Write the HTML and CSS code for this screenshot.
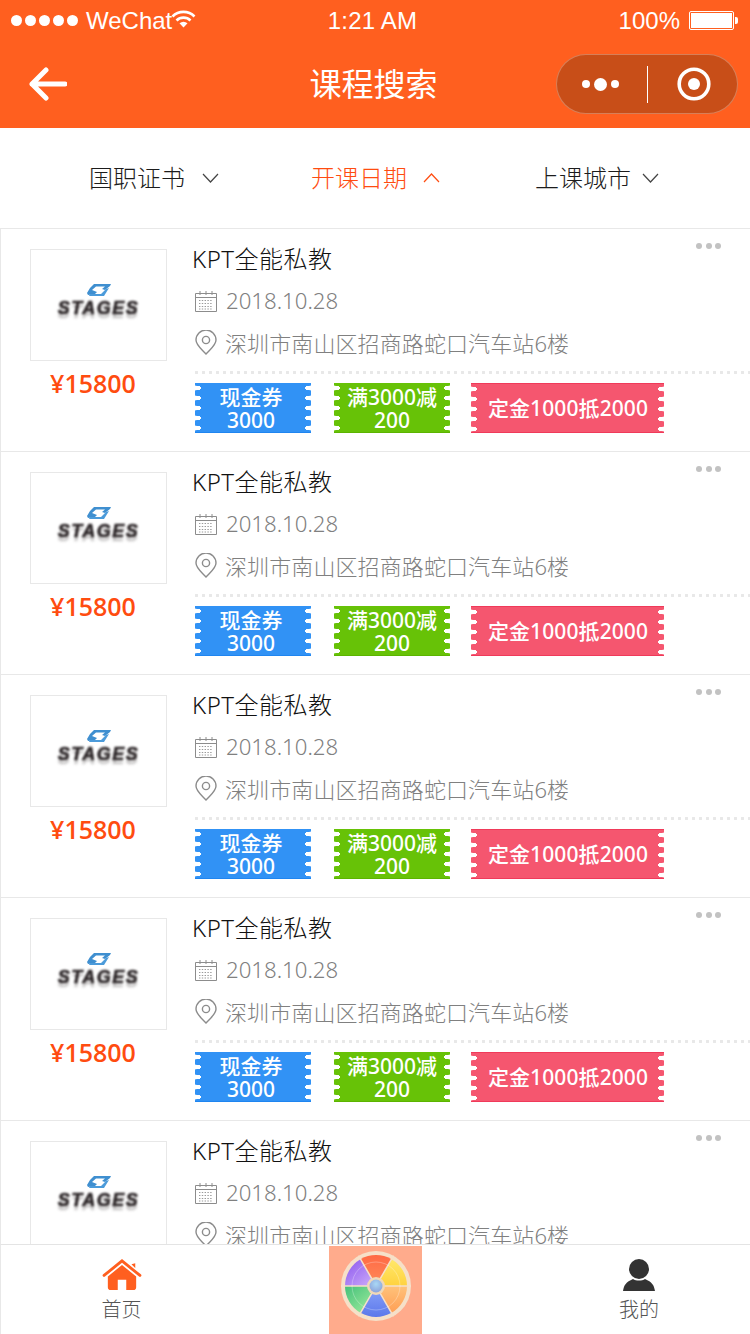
FILE: index.html
```html
<!DOCTYPE html>
<html lang="zh">
<head>
<meta charset="utf-8">
<title>课程搜索</title>
<link rel="stylesheet" href="styles.css">
</head>
<body>
<svg class="defs" width="0" height="0" aria-hidden="true">
  <symbol id="i-cal" viewBox="0 0 22 22">
    <path d="M.5 3.500h21v18H.5zM.5 7.500h21" fill="none" stroke="#8c8c8c"/>
    <path d="M5 1v4M11 1v4M17 1v4" stroke="#8c8c8c" fill="none"/>
    <path d="M4 10.500h14M4 13.500h14M4 16.500h14M4 19h14" stroke="#9a9a9a" stroke-dasharray="1.400 1.400" fill="none"/>
  </symbol>
  <symbol id="i-pin" viewBox="0 0 22 25">
    <path d="M11 24C6 18.500 1 15 1 10a10 10 0 0 1 20 0c0 5-5 8.500-10 14z" fill="none" stroke="#8c8c8c" stroke-width="1.400"/>
    <circle cx="11" cy="10" r="3.600" fill="none" stroke="#8c8c8c" stroke-width="1.400"/>
  </symbol>
  <symbol id="i-swoosh" viewBox="0 0 26 13">
    <path d="M8 0h17l-1 2-5 4-3-1 3-2.500H10L6 6l5 2-2 2-7 1-1-2 3-5z" fill="#3f8fd0"/>
    <path d="M20 5l3-1-5 8H3l1-2h11z" fill="#4c9bda"/>
  </symbol>
</svg>
<div class="page">
  <header class="top">
    <div class="status">
      <div class="status-left">
        <div class="signal"><i></i><i></i><i></i><i></i><i></i></div>
        <span class="carrier">WeChat</span>
        <svg class="wifi" width="25" height="18" viewBox="0 0 25 18">
          <path d="M1.500 6.500a15.500 15.500 0 0 1 22 0" fill="none" stroke="#fff" stroke-width="2.600"/>
          <path d="M5.500 10.500a10 10 0 0 1 14 0" fill="none" stroke="#fff" stroke-width="2.600"/>
          <path d="M8.500 13.200a6 6 0 0 1 8 0L12.500 17.500z" fill="#fff"/>
        </svg>
      </div>
      <span class="clock">1:21 AM</span>
      <div class="status-right">
        <span class="pct">100%</span>
        <div class="battery"><i></i></div>
        <div class="battery-cap"></div>
      </div>
    </div>
    <div class="nav">
      <svg class="back" width="38" height="34" viewBox="0 0 38 34">
        <path d="M17 3L3 17l14 14M3 17h33" fill="none" stroke="#fff" stroke-width="5" stroke-linecap="round" stroke-linejoin="round"/>
      </svg>
      <h1 class="title">课程搜索</h1>
      <div class="capsule">
        <div class="cap-dots"><i></i><b></b><i></i></div>
        <div class="cap-line"></div>
        <svg class="cap-ring" width="34" height="34" viewBox="0 0 34 34">
          <circle cx="17" cy="17" r="14.800" fill="none" stroke="#fff" stroke-width="3.600"/>
          <circle cx="17" cy="17" r="6" fill="#fff"/>
        </svg>
      </div>
    </div>
  </header>

  <nav class="filters">
    <div class="filter f-first"><span>国职证书</span><svg width="17" height="10" viewBox="0 0 17 10"><path d="M1 1l7.500 8L16 1" fill="none" stroke="#444" stroke-width="1.200"/></svg></div>
    <div class="filter filter-on"><span>开课日期</span><svg width="17" height="10" viewBox="0 0 17 10"><path d="M1 9l7.500-8L16 9" fill="none" stroke="#ff4c10" stroke-width="1.200"/></svg></div>
    <div class="filter f-last"><span>上课城市</span><svg width="17" height="10" viewBox="0 0 17 10"><path d="M1 1l7.500 8L16 1" fill="none" stroke="#444" stroke-width="1.200"/></svg></div>
  </nav>

  <main class="list">
    <article class="course">
      <div class="more"><i></i><i></i><i></i></div>
      <div class="side">
        <div class="thumb"><svg class="swoosh" width="26" height="13"><use href="#i-swoosh"/></svg><span class="brand">STAGES</span></div>
        <div class="price">¥15800</div>
      </div>
      <div class="info">
        <div class="name">KPT全能私教</div>
        <div class="meta meta-date"><svg width="22" height="22"><use href="#i-cal"/></svg><span>2018.10.28</span></div>
        <div class="meta meta-addr"><svg width="22" height="25"><use href="#i-pin"/></svg><span>深圳市南山区招商路蛇口汽车站6楼</span></div>
        <div class="tickets">
          <div class="ticket t-blue">现金券<br>3000</div>
          <div class="ticket t-green">满3000减<br>200</div>
          <div class="ticket t-red">定金1000抵2000</div>
        </div>
      </div>
    </article>
    <article class="course">
      <div class="more"><i></i><i></i><i></i></div>
      <div class="side">
        <div class="thumb"><svg class="swoosh" width="26" height="13"><use href="#i-swoosh"/></svg><span class="brand">STAGES</span></div>
        <div class="price">¥15800</div>
      </div>
      <div class="info">
        <div class="name">KPT全能私教</div>
        <div class="meta meta-date"><svg width="22" height="22"><use href="#i-cal"/></svg><span>2018.10.28</span></div>
        <div class="meta meta-addr"><svg width="22" height="25"><use href="#i-pin"/></svg><span>深圳市南山区招商路蛇口汽车站6楼</span></div>
        <div class="tickets">
          <div class="ticket t-blue">现金券<br>3000</div>
          <div class="ticket t-green">满3000减<br>200</div>
          <div class="ticket t-red">定金1000抵2000</div>
        </div>
      </div>
    </article>
    <article class="course">
      <div class="more"><i></i><i></i><i></i></div>
      <div class="side">
        <div class="thumb"><svg class="swoosh" width="26" height="13"><use href="#i-swoosh"/></svg><span class="brand">STAGES</span></div>
        <div class="price">¥15800</div>
      </div>
      <div class="info">
        <div class="name">KPT全能私教</div>
        <div class="meta meta-date"><svg width="22" height="22"><use href="#i-cal"/></svg><span>2018.10.28</span></div>
        <div class="meta meta-addr"><svg width="22" height="25"><use href="#i-pin"/></svg><span>深圳市南山区招商路蛇口汽车站6楼</span></div>
        <div class="tickets">
          <div class="ticket t-blue">现金券<br>3000</div>
          <div class="ticket t-green">满3000减<br>200</div>
          <div class="ticket t-red">定金1000抵2000</div>
        </div>
      </div>
    </article>
    <article class="course">
      <div class="more"><i></i><i></i><i></i></div>
      <div class="side">
        <div class="thumb"><svg class="swoosh" width="26" height="13"><use href="#i-swoosh"/></svg><span class="brand">STAGES</span></div>
        <div class="price">¥15800</div>
      </div>
      <div class="info">
        <div class="name">KPT全能私教</div>
        <div class="meta meta-date"><svg width="22" height="22"><use href="#i-cal"/></svg><span>2018.10.28</span></div>
        <div class="meta meta-addr"><svg width="22" height="25"><use href="#i-pin"/></svg><span>深圳市南山区招商路蛇口汽车站6楼</span></div>
        <div class="tickets">
          <div class="ticket t-blue">现金券<br>3000</div>
          <div class="ticket t-green">满3000减<br>200</div>
          <div class="ticket t-red">定金1000抵2000</div>
        </div>
      </div>
    </article>
    <article class="course">
      <div class="more"><i></i><i></i><i></i></div>
      <div class="side">
        <div class="thumb"><svg class="swoosh" width="26" height="13"><use href="#i-swoosh"/></svg><span class="brand">STAGES</span></div>
        <div class="price">¥15800</div>
      </div>
      <div class="info">
        <div class="name">KPT全能私教</div>
        <div class="meta meta-date"><svg width="22" height="22"><use href="#i-cal"/></svg><span>2018.10.28</span></div>
        <div class="meta meta-addr"><svg width="22" height="25"><use href="#i-pin"/></svg><span>深圳市南山区招商路蛇口汽车站6楼</span></div>
      </div>
    </article>
  </main>

  <footer class="tabbar">
    <div class="tab tab-home">
      <svg width="40" height="34" viewBox="0 0 42 36">
        <path d="M2 18.500L21 3l19 15.500" fill="none" stroke="#ff5f1f" stroke-width="3" stroke-linecap="round"/>
        <path d="M31 6.500l4-1v5z" fill="#ff5f1f"/>
        <path d="M6 19.500L21 7.500l15 12V31a3 3 0 0 1-3 3h-7.500V23h-9v11H9a3 3 0 0 1-3-3z" fill="#ff5f1f"/>
      </svg>
      <span>首页</span>
    </div>
    <div class="wheel-box">
      <svg width="72" height="72" viewBox="-36 -36 72 72">
        <defs>
          <linearGradient id="g-red" x1="0" y1="0" x2="0" y2="1"><stop offset="0" stop-color="#ff6a45"/><stop offset="1" stop-color="#ff8a5a"/></linearGradient>
          <linearGradient id="g-yel" x1="0" y1="0" x2="0" y2="1"><stop offset="0" stop-color="#ffe86a"/><stop offset="1" stop-color="#ffd23f"/></linearGradient>
          <linearGradient id="g-org" x1="0" y1="0" x2="0" y2="1"><stop offset="0" stop-color="#ffc27a"/><stop offset="1" stop-color="#ff9f55"/></linearGradient>
          <linearGradient id="g-blu" x1="0" y1="0" x2="0" y2="1"><stop offset="0" stop-color="#8aa4fa"/><stop offset="1" stop-color="#5c78ea"/></linearGradient>
          <linearGradient id="g-grn" x1="0" y1="0" x2="1" y2="1"><stop offset="0" stop-color="#44c07a"/><stop offset="1" stop-color="#a8f0a0"/></linearGradient>
          <linearGradient id="g-pur" x1="0" y1="0" x2="1" y2="1"><stop offset="0" stop-color="#8a55ee"/><stop offset="1" stop-color="#d0b0fa"/></linearGradient>
          <radialGradient id="g-hub" cx=".5" cy=".35" r=".7"><stop offset="0" stop-color="#a9d8f5"/><stop offset="1" stop-color="#8a9fd8"/></radialGradient>
        </defs>
        <circle r="35" fill="#f6e0c8"/>
        <path d="M0 0L-15.500-26.800A31 31 0 0 1 15.500-26.800z" fill="url(#g-red)"/>
        <path d="M0 0L15.500-26.800A31 31 0 0 1 31 0z" fill="url(#g-yel)"/>
        <path d="M0 0L31 0A31 31 0 0 1 15.500 26.800z" fill="url(#g-org)"/>
        <path d="M0 0L15.500 26.800A31 31 0 0 1-15.500 26.800z" fill="url(#g-blu)"/>
        <path d="M0 0L-15.500 26.800A31 31 0 0 1-31 0z" fill="url(#g-grn)"/>
        <path d="M0 0L-31 0A31 31 0 0 1-15.500-26.800z" fill="url(#g-pur)"/>
        <path d="M-35 0H35M-17.500-30.300L17.500 30.300M17.500-30.300L-17.500 30.300" stroke="#f6e0c8" stroke-width="1.500"/>
        <circle r="24" fill="none" stroke="#fff" stroke-opacity=".35" stroke-width=".8"/>
        <circle r="9" fill="#f0d8b8"/>
        <circle r="6.500" fill="url(#g-hub)"/>
      </svg>
    </div>
    <div class="tab tab-me">
      <svg width="34" height="34" viewBox="0 0 34 34">
        <circle cx="17" cy="11" r="10" fill="#333"/>
        <path d="M1 33c1-6 3-9 10-12 3 2 9 2 12 0 7 3 9 6 10 12z" fill="#333"/>
      </svg>
      <span>我的</span>
    </div>
  </footer>
</div>
</body>
</html>
```

FILE: styles.css
```css
* { box-sizing: border-box; }
html, body { margin: 0; padding: 0; }
body {
  font-family: "Open Sans", "Noto Sans CJK SC", sans-serif;
  background: #fff;
  color: #222;
}
.defs { position: absolute; }
.page {
  width: 750px;
  height: 1334px;
  display: flex;
  flex-direction: column;
  overflow: hidden;
}

/* header */
.top { background: #ff5f1f; color: #fff; height: 128px; flex: none; }
.status {
  height: 40px;
  display: grid;
  grid-template-columns: 1fr auto 1fr;
  align-items: center;
  padding: 1px 12px 0 11px;
  font-family: "Liberation Sans", sans-serif;
  font-size: 24px;
}
.status-left { display: flex; align-items: center; }
.signal { display: flex; gap: 3px; margin-right: 8px; }
.signal i { width: 11px; height: 11px; border-radius: 50%; background: #fff; }
.carrier { width: 81px; }
.wifi { margin: -3px 0 0 4px; }
.clock { position: relative; left: -2px; letter-spacing: .2px; }
.status-right { display: flex; align-items: center; justify-content: flex-end; }
.pct { margin-right: 9px; }
.battery { width: 45px; height: 19px; border: 1px solid #fff; border-radius: 2px; padding: 1px; }
.battery i { display: block; height: 100%; background: #fff; }
.battery-cap { width: 3px; height: 7px; background: #fff; border-radius: 0 2px 2px 0; margin-left: 1px; }

.nav {
  height: 88px;
  display: flex;
  align-items: center;
  justify-content: space-between;
  padding: 0 12px 0 29px;
  position: relative;
}
.title {
  position: absolute;
  left: 0;
  right: 3px;
  top: 20px;
  margin: 0;
  text-align: center;
  font-size: 32px;
  font-weight: 400;
  line-height: 44px;
  font-family: "Noto Sans CJK SC", sans-serif;
}
.capsule {
  width: 182px;
  height: 60px;
  background: #c84e18;
  border: 1px solid rgba(255, 255, 255, .28);
  border-radius: 30px;
  display: flex;
  align-items: center;
  padding-left: 25px;
}
.cap-dots { display: flex; align-items: center; gap: 4px; width: 38px; }
.cap-dots i { width: 8px; height: 8px; border-radius: 50%; background: #fff; }
.cap-dots b { width: 13px; height: 13px; border-radius: 50%; background: #fff; }
.cap-line { width: 1px; height: 37px; background: #fff; margin-left: 27px; }
.cap-ring { margin-left: 29px; }

/* filters */
.filters {
  height: 100px;
  flex: none;
  display: flex;
  justify-content: center;
  align-items: center;
  gap: 94px;
  padding: 0 2px 4px 0;
  font-family: "Noto Sans CJK SC", sans-serif;
  font-weight: 300;
  font-size: 24px;
  color: #1c1c1c;
}
.filter { display: flex; align-items: center; gap: 16px; }
.filter svg { margin-top: 4px; }
.f-first { gap: 17px; }
.f-last { gap: 11px; }
.filter-on { color: #ff4c10; margin: 0 1px 0 -2px; }

/* list */
.list { flex: 1; min-height: 0; overflow: hidden; }
.course {
  height: 223px;
  position: relative;
  display: flex;
  border-top: 1px solid #e8e8e8;
  border-left: 1px solid #e8e8e8;
  padding: 20px 0 0 29px;
}
.more { position: absolute; right: 29px; top: 14px; display: flex; gap: 3.500px; }
.more i { width: 6px; height: 6px; border-radius: 50%; background: #c2c2c2; }
.side { width: 137px; flex: none; }
.thumb {
  height: 112px;
  border: 1px solid #e8e8e8;
  display: flex;
  flex-direction: column;
  align-items: center;
  justify-content: center;
  padding: 0 0 9px 0;
}
.swoosh { filter: blur(.7px); }
.brand {
  font-family: "Liberation Sans", sans-serif;
  font-style: italic;
  font-weight: 700;
  font-size: 18px;
  line-height: 20px;
  letter-spacing: 1.500px;
  color: #2e282a;
  -webkit-text-stroke: .6px #2e282a;
  text-shadow: 0 4px 2px rgba(60, 55, 55, .35);
  filter: blur(1.1px);
  margin-top: 1px;
}
.price {
  margin-top: 6px;
  padding-right: 11px;
  text-align: center;
  font-family: "Open Sans", sans-serif;
  font-size: 25px;
  font-weight: 600;
  line-height: 32px;
  color: #ff4c10;
}
.info { flex: 1; margin-left: 25px; min-width: 0; }
.name {
  font-size: 24px;
  letter-spacing: .5px;
  line-height: 30px;
  margin-top: -5px;
  color: #111;
  font-family: "Noto Sans", "Noto Sans CJK SC", sans-serif;
  font-weight: 300;
}
.meta {
  display: flex;
  align-items: center;
  gap: 9px;
  height: 42px;
  margin-left: 3px;
  color: #808080;
  font-size: 22.200px;
  font-weight: 300;
  font-family: "Noto Sans", "Noto Sans CJK SC", sans-serif;
  white-space: nowrap;
}
.meta-date { margin-top: 6px; height: 41px; }
.meta-addr { gap: 8px; font-size: 22px; letter-spacing: .1px; }
.tickets {
  display: flex;
  margin-left: 3px;
  margin-top: 8px;
  padding-top: 12px;
  background: radial-gradient(circle at 1.500px 1.500px, #e8e8e8 1.400px, transparent 1.600px) 0 0 / 7px 3px repeat-x;
}
.ticket {
  position: relative;
  height: 50px;
  padding-top: 2px;
  color: #fff;
  text-align: center;
  font-family: "Noto Sans", "Noto Sans CJK SC", sans-serif;
  font-weight: 500;
  font-size: 21px;
  line-height: 23px;
  display: flex;
  align-items: center;
  justify-content: center;
}
.ticket::before, .ticket::after {
  content: "";
  position: absolute;
  top: 0;
  bottom: 0;
  width: 7px;
  background-size: 7px 10px;
  background-repeat: repeat-y;
}
.ticket::before { left: 0; background-image: radial-gradient(ellipse 6.500px 2.600px at 0 50%, #fff 90%, rgba(255,255,255,0) 100%); }
.ticket::after { right: 0; background-image: radial-gradient(ellipse 6.500px 2.600px at 100% 50%, #fff 90%, rgba(255,255,255,0) 100%); }
.t-blue { width: 116px; padding-right: 4px; background: #3192f5; border-bottom: 1px solid #1f85f0; }
.t-green { width: 116px; margin-left: 23px; background: #67c207; border-bottom: 1px solid #5cb400; }
.t-red { width: 193px; margin-left: 21px; padding: 0 0 0 1px; background: #f5566f; border-bottom: 1px solid #f03a5a; border-top: 1px solid #f03a5a; letter-spacing: .1px; }

/* tab bar */
.tabbar {
  height: 90px;
  flex: none;
  background: #fff;
  border-top: 1px solid #e4e4e4;
  border-left: 1px solid #e8e8e8;
  display: flex;
  position: relative;
  font-family: "Noto Sans CJK SC", sans-serif;
  font-weight: 300;
  font-size: 20px;
  color: #555;
}
.tab { display: flex; flex-direction: column; align-items: center; padding-top: 13px; }
.tab span { line-height: 28px; margin-top: 3px; }
.tab-home { width: 241px; }
.tab-me { width: 222px; margin-left: auto; }
.wheel-box {
  width: 93px;
  height: 88px;
  margin: 1px 0 0 87px;
  background: #ffab8c;
  display: flex;
  justify-content: center;
  padding-top: 4px;
}
```
